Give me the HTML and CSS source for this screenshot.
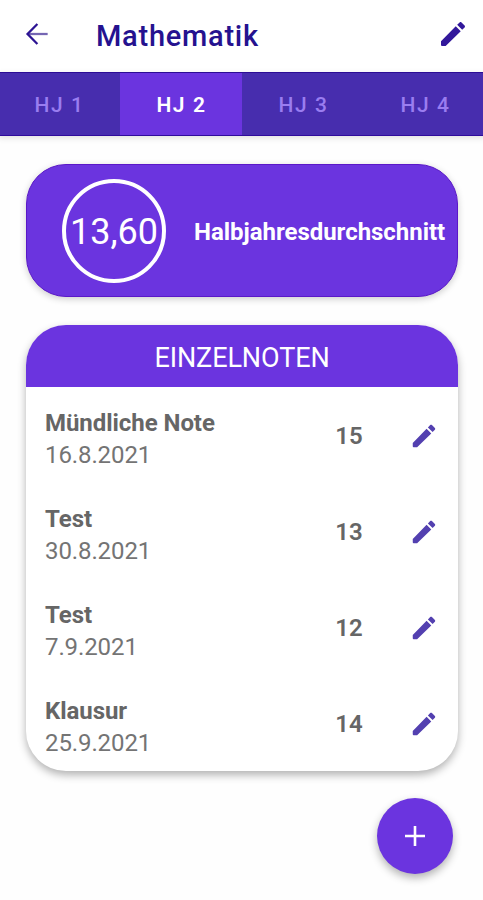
FILE: index.html
```html
<!DOCTYPE html>
<html lang="de">

<head>
  <meta charset="UTF-8">
  <meta name="viewport" content="width=device-width, initial-scale=1.0">
  <title>Mathematik</title>
  <link rel="stylesheet" href="styles.css">
</head>

<body>
  <svg class="icon-defs" xmlns="http://www.w3.org/2000/svg">
    <symbol id="pencil" viewBox="0 0 24 24">
      <path d="M3 17.5V20.2q0 .8.8.8H6.5L17.81 9.94l-3.75-3.75L3 17.5zM20.71 7.04c.39-.39.39-1.02 0-1.41l-2.34-2.34c-.39-.39-1.02-.39-1.41 0l-1.83 1.83 3.75 3.75 1.83-1.83z"/>
    </symbol>
  </svg>

  <header class="app-bar">
    <a href="#" class="back-link" aria-label="Zurück">
      <svg viewBox="0 0 24 24" width="32" height="32" fill="none" stroke-width="1.7">
        <path class="back-shaft" d="M5 12H20"/>
        <path class="back-head" d="M12.3 4.5L4.9 12l7.4 7.5"/>
      </svg>
    </a>
    <h1>Mathematik</h1>
    <button class="icon-button" aria-label="Fach bearbeiten">
      <svg width="32" height="32"><use href="#pencil"/></svg>
    </button>
  </header>

  <nav class="tabs">
    <a href="#" class="tab">HJ 1</a>
    <a href="#" class="tab active">HJ 2</a>
    <a href="#" class="tab">HJ 3</a>
    <a href="#" class="tab">HJ 4</a>
  </nav>

  <main>
    <section class="average-card">
      <div class="average-circle">13,60</div>
      <div class="average-label">Halbjahresdurchschnitt</div>
    </section>

    <section class="grades-card">
      <h2>EINZELNOTEN</h2>
      <ul class="grades">
        <li class="grade">
          <div class="grade-info">
            <div class="grade-name">Mündliche Note</div>
            <div class="grade-date">16.8.2021</div>
          </div>
          <div class="grade-points">15</div>
          <button class="icon-button small" aria-label="Bearbeiten"><svg width="30" height="30"><use href="#pencil"/></svg></button>
        </li>
        <li class="grade">
          <div class="grade-info">
            <div class="grade-name">Test</div>
            <div class="grade-date">30.8.2021</div>
          </div>
          <div class="grade-points">13</div>
          <button class="icon-button small" aria-label="Bearbeiten"><svg width="30" height="30"><use href="#pencil"/></svg></button>
        </li>
        <li class="grade">
          <div class="grade-info">
            <div class="grade-name">Test</div>
            <div class="grade-date">7.9.2021</div>
          </div>
          <div class="grade-points">12</div>
          <button class="icon-button small" aria-label="Bearbeiten"><svg width="30" height="30"><use href="#pencil"/></svg></button>
        </li>
        <li class="grade">
          <div class="grade-info">
            <div class="grade-name">Klausur</div>
            <div class="grade-date">25.9.2021</div>
          </div>
          <div class="grade-points">14</div>
          <button class="icon-button small" aria-label="Bearbeiten"><svg width="30" height="30"><use href="#pencil"/></svg></button>
        </li>
      </ul>
    </section>

    <button class="add-button" aria-label="Note hinzufügen">
      <svg viewBox="0 0 20 20" width="20" height="20" fill="none" stroke="#ffffff" stroke-width="2.6">
        <path d="M10 0v20M0 10h20"/>
      </svg>
    </button>
  </main>
</body>

</html>
```
FILE: styles.css
```css
* {
  box-sizing: border-box;
}

body {
  font-family: Roboto, sans-serif;
  background-color: #fefefe;
  color: #666666;
  margin: 0;
  height: 900px;
  overflow: hidden;
}

h1,
h2,
ul {
  margin: 0;
  padding: 0;
}

button {
  border: none;
  background: none;
  padding: 0;
  cursor: pointer;
}

svg {
  display: block;
}

.icon-defs {
  display: none;
}

.app-bar {
  display: flex;
  align-items: center;
  height: 72px;
  padding: 0 14px 4px 21px;
  background-color: #ffffff;
}

.back-link {
  stroke: #2c1493;
}

.back-shaft {
  stroke: #7566b3;
}

.app-bar h1 {
  flex: 1;
  margin-left: 43px;
  padding-top: 3px;
  color: #25128f;
  font-size: 29px;
  font-weight: 500;
  line-height: 36px;
  letter-spacing: 0.75px;
}

.icon-button {
  fill: #32189b;
}

.icon-button.small {
  fill: #5340b0;
}

.tabs {
  display: flex;
  height: 64px;
  margin-left: -2px;
  width: 488px;
  background-color: #472dae;
  border-top: 1px solid #2c0d95;
  border-bottom: 1px solid #2f0b9c;
  box-shadow: 0 2px 6px rgba(0, 0, 0, 0.12);
}

.tab {
  width: 122px;
  height: 62px;
  padding-left: 1px;
  line-height: 65px;
  text-align: center;
  text-decoration: none;
  font-size: 21px;
  font-weight: 500;
  letter-spacing: 1.6px;
  color: #9a7df0;
}

.tab.active {
  background-color: #6b34df;
  color: #ffffff;
  font-weight: 600;
}

main {
  display: flex;
  flex-direction: column;
  padding: 28px 25px 0 26px;
}

.average-card {
  display: flex;
  align-items: center;
  height: 133px;
  padding-left: 35px;
  border: 1px solid #5a18c8;
  border-radius: 40px;
  background-color: #6b34df;
  color: #ffffff;
  box-shadow: 0 2px 7px rgba(0, 0, 0, 0.2);
}

.average-circle {
  display: flex;
  align-items: center;
  justify-content: center;
  width: 104px;
  height: 104px;
  padding-top: 3px;
  border: 4px solid #ffffff;
  border-radius: 50%;
  font-size: 36px;
  white-space: nowrap;
}

.average-label {
  margin-left: 28px;
  padding-top: 2px;
  font-size: 24px;
  font-weight: 700;
  letter-spacing: -0.03px;
  white-space: nowrap;
}

.grades-card {
  height: 446px;
  margin-top: 28px;
  border-radius: 40px;
  overflow: hidden;
  background-color: #ffffff;
  box-shadow: 0 4px 8px rgba(0, 0, 0, 0.3);
}

.grades-card h2 {
  height: 62px;
  line-height: 66px;
  background-color: #6b34df;
  color: #ffffff;
  font-size: 27px;
  font-weight: 400;
  letter-spacing: -0.1px;
  text-align: center;
}

.grades {
  list-style: none;
}

.grade {
  display: flex;
  align-items: center;
  height: 96px;
  padding: 2px 19px 0 19px;
}

.grade-info {
  flex: 1;
  padding-top: 6px;
}

.grade-name,
.grade-date,
.grade-points {
  font-size: 24px;
  line-height: 32px;
}

.grade-name,
.grade-points {
  font-weight: 700;
}

.grade-name {
  letter-spacing: -0.05px;
}

.grade-date {
  color: #747474;
  letter-spacing: -0.1px;
}

.grade-points {
  width: 56px;
  margin-right: 32px;
  text-align: center;
  font-weight: 600;
}

.add-button {
  display: flex;
  align-items: center;
  justify-content: center;
  align-self: flex-end;
  width: 76px;
  height: 76px;
  margin: 27px 5px 0 0;
  border-radius: 50%;
  background-color: #6b34df;
  box-shadow: 0 4px 9px rgba(0, 0, 0, 0.3);
}
```
